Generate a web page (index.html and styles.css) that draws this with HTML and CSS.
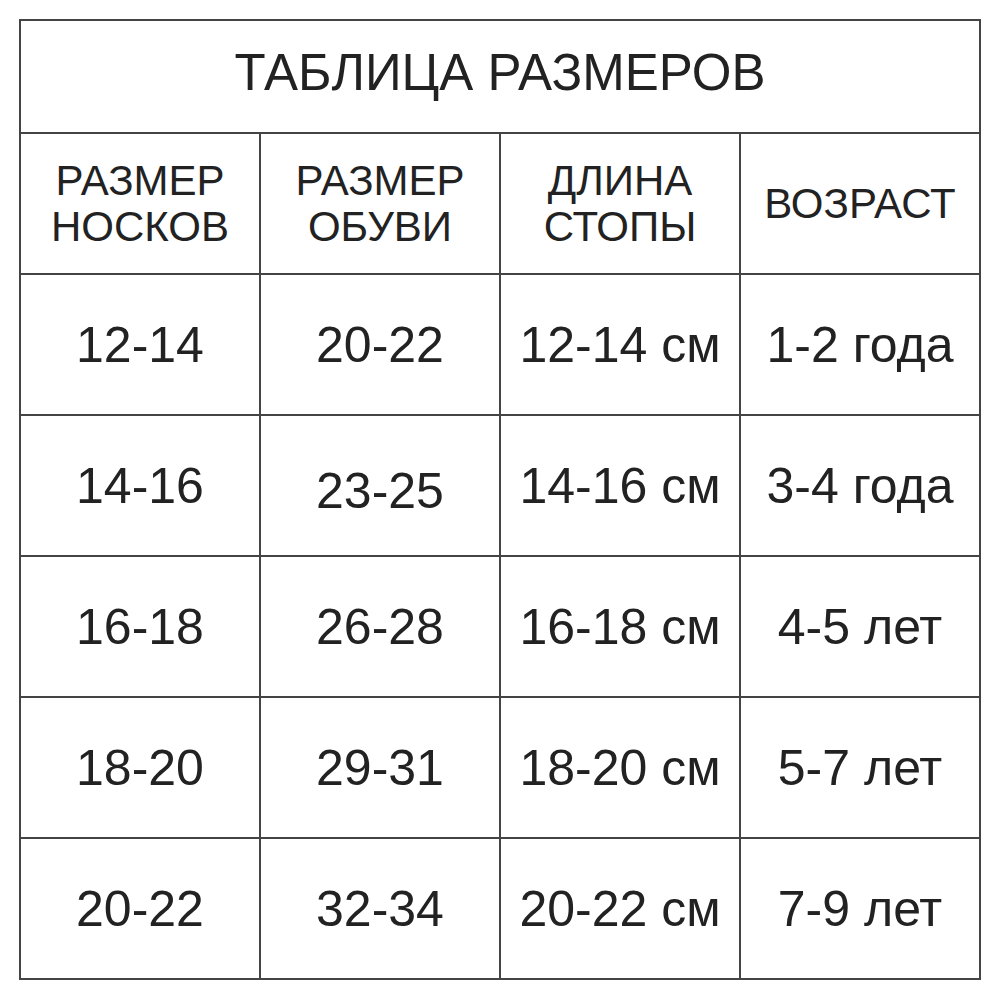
FILE: index.html
```html
<!DOCTYPE html>
<html lang="ru">
<head>
<meta charset="utf-8">
<title>Таблица размеров</title>
<link rel="stylesheet" href="styles.css">
</head>
<body>
<div class="table">
  <div class="cell title">ТАБЛИЦА РАЗМЕРОВ</div>
  <div class="cell head">РАЗМЕР<br>НОСКОВ</div>
  <div class="cell head">РАЗМЕР<br>ОБУВИ</div>
  <div class="cell head">ДЛИНА<br>СТОПЫ</div>
  <div class="cell head">ВОЗРАСТ</div>

  <div class="cell">12-14</div>
  <div class="cell">20-22</div>
  <div class="cell">12-14 см</div>
  <div class="cell">1-2 года</div>

  <div class="cell">14-16</div>
  <div class="cell low">23-25</div>
  <div class="cell">14-16 см</div>
  <div class="cell">3-4 года</div>

  <div class="cell">16-18</div>
  <div class="cell">26-28</div>
  <div class="cell">16-18 см</div>
  <div class="cell">4-5 лет</div>

  <div class="cell">18-20</div>
  <div class="cell">29-31</div>
  <div class="cell">18-20 см</div>
  <div class="cell">5-7 лет</div>

  <div class="cell">20-22</div>
  <div class="cell">32-34</div>
  <div class="cell">20-22 см</div>
  <div class="cell">7-9 лет</div>
</div>
</body>
</html>
```

FILE: styles.css
```css
html, body {
  margin: 0;
  padding: 0;
  background: #ffffff;
}

body {
  padding: 19px 0 0 19px;
  font-family: "Liberation Sans", Arial, sans-serif;
  color: #222222;
}

.table {
  display: grid;
  grid-template-columns: repeat(4, 240px);
  grid-template-rows: 113px repeat(6, 141px);
  width: 962px;
  box-sizing: border-box;
  border-left: 2px solid #444444;
  border-top: 2px solid #444444;
}

.cell {
  box-sizing: border-box;
  border-right: 2px solid #444444;
  border-bottom: 2px solid #444444;
  display: flex;
  align-items: center;
  justify-content: center;
  text-align: center;
  font-size: 50px;
  line-height: 1;
}

.title {
  grid-column: 1 / 5;
  font-size: 51px;
  padding-bottom: 8px;
}

.head {
  font-size: 42px;
  line-height: 46px;
}

.low {
  padding-top: 10px;
}
```
